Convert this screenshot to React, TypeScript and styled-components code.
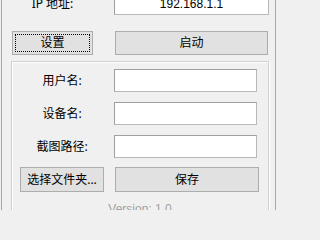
import React from "react";
import styled, { createGlobalStyle } from "styled-components";

const GlobalStyle = createGlobalStyle`
  html, body {
    margin: 0;
    padding: 0;
    background: #f0f0f0;
    font-family: "Noto Sans", "Noto Sans CJK SC", sans-serif;
    font-size: 12px;
    color: #000;
  }
`;

const Frame = styled.div`
  box-sizing: border-box;
  margin-left: 1px;
  width: 275px;
  height: 210px;
  overflow: hidden;
  border-left: 1px solid #a8a8a8;
  border-right: 1px solid #a8a8a8;
  padding: 0 0 0 10px;
`;

const TopGrid = styled.div`
  display: grid;
  grid-template-columns: 81px 155px;
  grid-template-rows: 23px 24px;
  column-gap: 21px;
  row-gap: 16px;
  margin-top: -8px;
  align-items: center;
`;

const Label = styled.span`
  text-align: center;
  line-height: 16px;
  white-space: nowrap;
`;

const TextBox = styled.div<{ $center?: boolean }>`
  box-sizing: border-box;
  height: 23px;
  background: #fff;
  border: 1px solid #a0a0a0;
  border-right-color: #b8b8b8;
  border-bottom-color: #b8b8b8;
  display: flex;
  align-items: center;
  justify-content: ${(p) => (p.$center ? "center" : "flex-start")};
  padding: 0 3px;
  font-family: "Liberation Sans", "Noto Sans CJK SC", sans-serif;
  font-size: 12px;
`;

const Button = styled.div<{ $focus?: boolean; $inset?: number }>`
  position: relative;
  box-sizing: border-box;
  height: 100%;
  margin: 0 ${(p) => p.$inset ?? 0}px;
  background: #e1e1e1;
  border: 1px solid #adadad;
  display: flex;
  align-items: center;
  justify-content: center;
  line-height: 16px;
  ${(p) =>
    p.$focus &&
    `
    &::after {
      content: "";
      position: absolute;
      inset: 2px;
      border: 1px dotted #000;
    }
  `}
`;

const Group = styled.div`
  box-sizing: border-box;
  margin: 6px 0 0 -1px;
  width: 258px;
  height: 160px;
  border: 1px solid #d0d0d0;
  box-shadow: inset 1px 1px 0 #fff, 1px 1px 0 #fff;
  padding: 7px 0 0 8px;
`;

const FormGrid = styled.div`
  display: grid;
  grid-template-columns: 84px 143px;
  grid-auto-rows: 23px;
  column-gap: 10px;
  row-gap: 10px;
  align-items: center;
`;

const ButtonRow = styled.div`
  display: grid;
  grid-template-columns: 84px 144px;
  column-gap: 11px;
  height: 25px;
  margin-top: 9px;
`;

const Version = styled.div`
  margin: 9px 0 0 -9px;
  width: 258px;
  text-align: center;
  color: #a0a0a0;
  line-height: 16px;
  font-family: "Liberation Sans", sans-serif;
  font-size: 12px;
`;

export default function App() {
  return (
    <>
      <GlobalStyle />
      <Frame>
        <TopGrid>
          <Label>IP 地址:</Label>
          <TextBox $center>192.168.1.1</TextBox>
          <Button $focus>设置</Button>
          <Button $inset={1}>启动</Button>
        </TopGrid>
        <Group>
          <FormGrid>
            <Label>用户名:</Label>
            <TextBox />
            <Label>设备名:</Label>
            <TextBox />
            <Label>截图路径:</Label>
            <TextBox />
          </FormGrid>
          <ButtonRow>
            <Button>选择文件夹...</Button>
            <Button>保存</Button>
          </ButtonRow>
          <Version>Version: 1.0</Version>
        </Group>
      </Frame>
    </>
  );
}
